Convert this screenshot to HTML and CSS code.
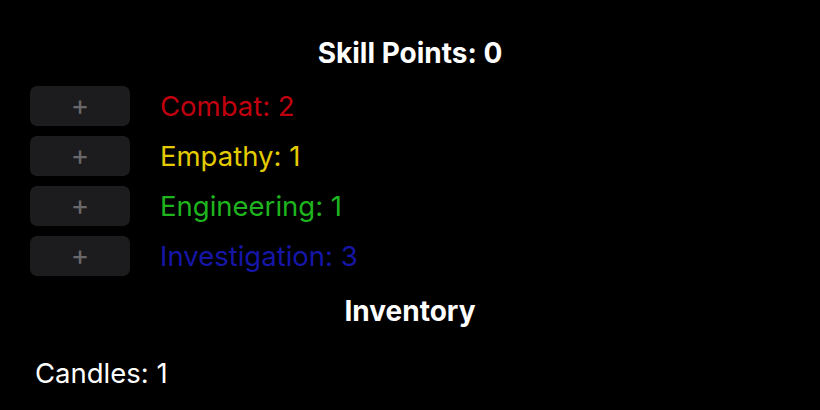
FILE: index.html
```html
<!DOCTYPE html>
<html lang="en">
<head>
    <meta charset="UTF-8">
    <title>Skills</title>
    <link rel="stylesheet" href="styles.css">
</head>
<body>
    <h2 class="title">Skill Points: 0</h2>
    <div class="skills">
        <div class="skill">
            <button class="add">+</button>
            <span class="name combat">Combat: 2</span>
        </div>
        <div class="skill">
            <button class="add">+</button>
            <span class="name empathy">Empathy: 1</span>
        </div>
        <div class="skill">
            <button class="add">+</button>
            <span class="name engineering">Engineering: 1</span>
        </div>
        <div class="skill">
            <button class="add">+</button>
            <span class="name investigation">Investigation: 3</span>
        </div>
    </div>
    <h2 class="title inventory">Inventory</h2>
    <ul class="items">
        <li>Candles: 1</li>
    </ul>
</body>
</html>
```

FILE: styles.css
```css
body {
    margin: 0;
    padding: 36px 30px 0;
    background-color: #000;
    color: #fff;
    font-family: Inter, "Noto Sans", sans-serif;
}
.title {
    margin: 0;
    text-align: center;
    font-size: 28px;
    font-weight: 700;
    line-height: 34px;
}
.skills {
    display: flex;
    flex-direction: column;
    gap: 10px;
    margin-top: 16px;
}
.skill {
    display: flex;
    align-items: center;
    gap: 30px;
}
.add {
    width: 100px;
    height: 40px;
    border: none;
    border-radius: 7px;
    background-color: #1c1c1e;
    color: #68686b;
    font-family: inherit;
    font-size: 28px;
    font-weight: 400;
    line-height: 1;
    padding: 0 0 3px;
}
.name {
    font-size: 27.5px;
    line-height: 40px;
}
.combat { color: #c0000e; }
.empathy { color: #e4cb00; }
.engineering { color: #1eb41e; }
.investigation { color: #1616a8; }
.inventory {
    margin-top: 18px;
}
.items {
    list-style: none;
    margin: 28px 0 0;
    padding: 0 0 0 5px;
    font-size: 27.5px;
    line-height: 34px;
}
```
